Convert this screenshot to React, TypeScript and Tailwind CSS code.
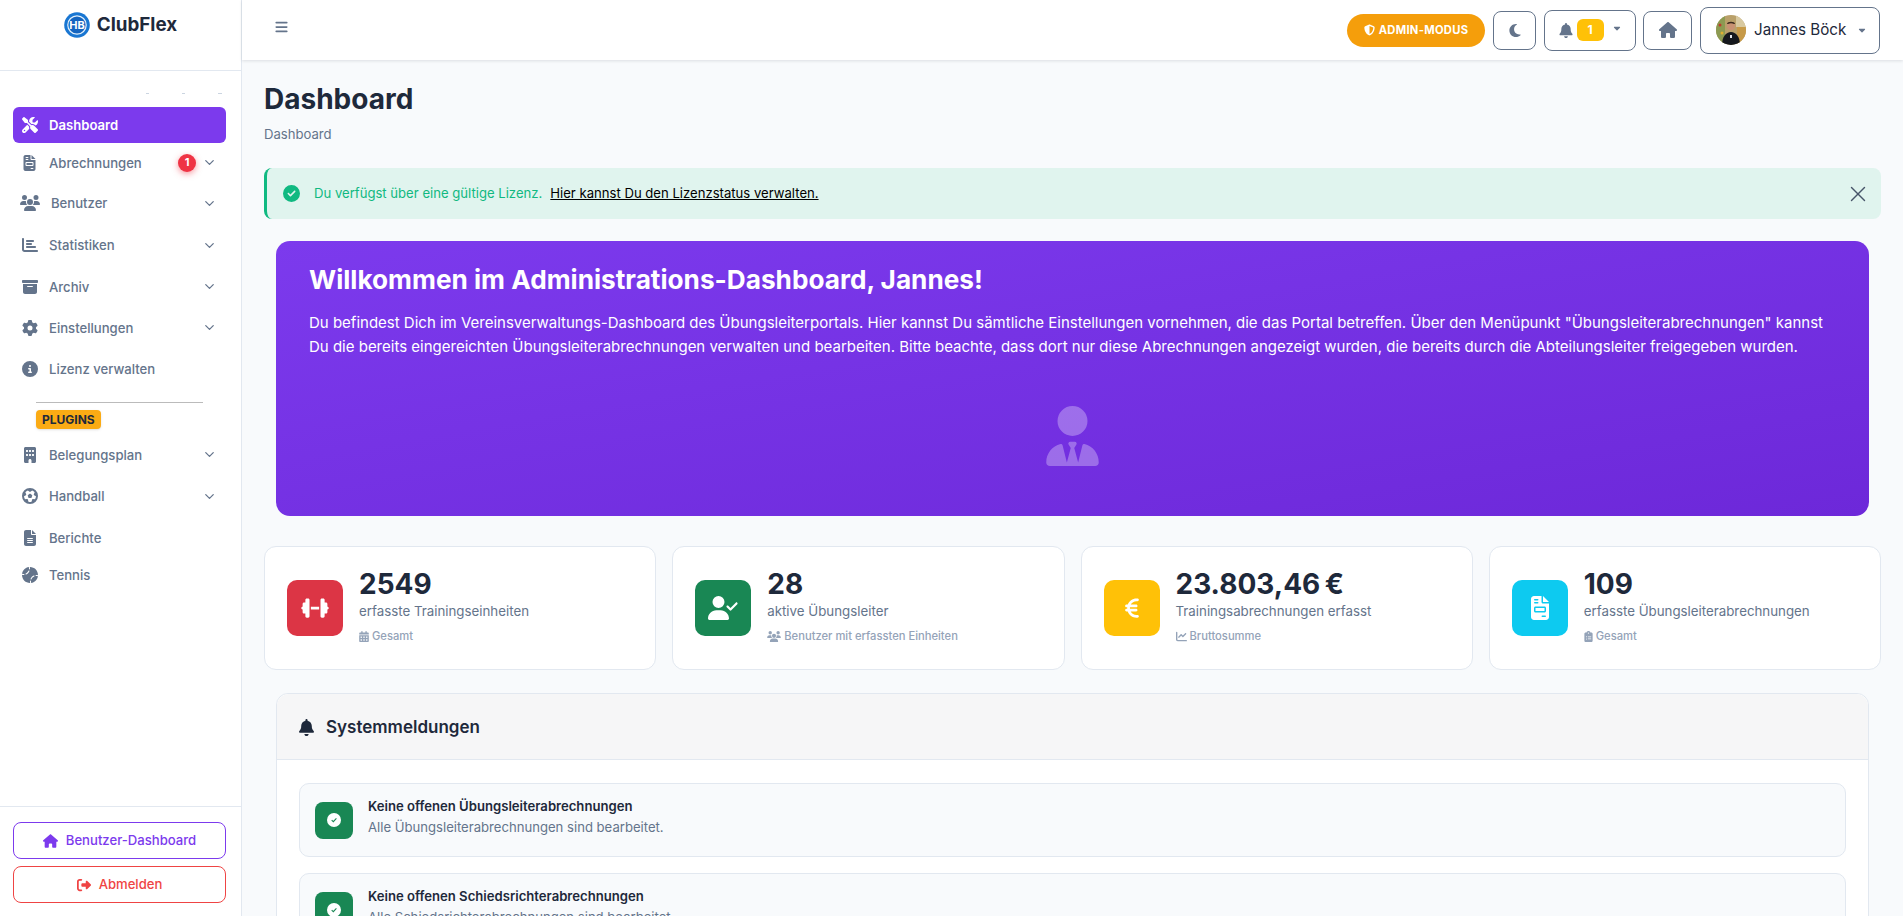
import React from "react";
import { ChevronDown, X } from "lucide-react";
import {
  FaScrewdriverWrench, FaFileInvoice, FaUsers, FaChartBar, FaBoxArchive, FaGear, FaCircleInfo, FaBuilding, FaFutbol,
  FaFileLines, FaBaseball, FaHouse, FaRightFromBracket, FaShieldHalved, FaMoon, FaBell, FaDumbbell, FaUserCheck,
  FaEuroSign, FaCalendarDays, FaChartLine, FaClipboardList, FaCircleCheck, FaUserTie, FaBars, FaCaretDown,
} from "react-icons/fa6";

function Logo() {
  return (
    <svg width="26" height="26" viewBox="0 0 26 26" className="shrink-0">
      <circle cx="13" cy="13" r="12.8" fill="#1976d2" />
      <circle cx="13" cy="13" r="9.8" fill="#e3f0fb" />
      <circle cx="13" cy="13" r="8.6" fill="#1565c0" />
      <text x="13" y="17" textAnchor="middle" fontSize="11" fontWeight="700" fill="#ffffff" fontFamily="Inter, sans-serif">HB</text>
    </svg>
  );
}

function Avatar() {
  return (
    <svg width="30" height="30" viewBox="0 0 30 30" className="shrink-0 rounded-full">
      <rect width="30" height="30" fill="#b9a06a" />
      <rect x="0" y="0" width="9" height="30" fill="#8c9a52" />
      <rect x="20" y="0" width="10" height="12" fill="#d8c9a0" />
      <rect x="21" y="12" width="9" height="18" fill="#c79a48" />
      <circle cx="4" cy="10" r="1.5" fill="#c0392b" />
      <circle cx="6" cy="18" r="1.5" fill="#e0b030" />
      <circle cx="15" cy="11" r="4.2" fill="#c99273" />
      <path d="M11 9c0-3 8-3 8 0l-1 0c-2-1-4-1-6 0z" fill="#3a2a1e" />
      <path d="M6 30c0-8 4-13 9-13s9 5 9 13z" fill="#15181d" />
      <rect x="14" y="20" width="2" height="3" fill="#e5e7eb" />
    </svg>
  );
}

type Item = { label: string; icon: React.ReactNode; h: string; chevron?: boolean; badge?: boolean; gap?: string };

const ic = "w-4 h-4";
const group1: Item[] = [
  { label: "Abrechnungen", icon: <FaFileInvoice className="w-[13px] h-[16px]" />, h: "h-[39px]", chevron: true, badge: true },
  { label: "Benutzer", icon: <FaUsers className="w-[20px] h-[16px] shrink-0" />, h: "h-[42px]", chevron: true, gap: "gap-[13px]" },
  { label: "Statistiken", icon: <FaChartBar className={ic} />, h: "h-[42px]", chevron: true },
  { label: "Archiv", icon: <FaBoxArchive className={ic} />, h: "h-[41px]", chevron: true },
  { label: "Einstellungen", icon: <FaGear className={ic} />, h: "h-[41px]", chevron: true },
  { label: "Lizenz verwalten", icon: <FaCircleInfo className={ic} />, h: "h-[41px]" },
];
const group2: Item[] = [
  { label: "Belegungsplan", icon: <FaBuilding className={ic} />, h: "h-[41px]", chevron: true },
  { label: "Handball", icon: <FaFutbol className={ic} />, h: "h-[42px]", chevron: true },
  { label: "Berichte", icon: <FaFileLines className={ic} />, h: "h-[41px]" },
  { label: "Tennis", icon: <FaBaseball className={ic} />, h: "h-[33px]" },
];

function NavRow({ item }: { item: Item }) {
  return (
    <div className={`flex items-center ${item.h} ml-[13px] w-[213px] pl-[8px] pr-[9px] text-[#64748b] text-[13.12px] font-medium ${item.gap ?? "gap-[11px]"}`}>
      <span className="w-[17px] flex justify-center shrink-0">{item.icon}</span>
      <span className="flex-1 pt-[2px]">{item.label}</span>
      {item.badge && (
        <span className="w-[18px] h-[18px] rounded-full bg-[#ef3344] text-white text-[11px] font-bold flex items-center justify-center shadow-[0_2px_6px_rgba(239,51,68,0.5)] -mr-[5px]">1</span>
      )}
      {item.chevron && <ChevronDown className="w-[15px] h-[15px] shrink-0" strokeWidth={2} />}
    </div>
  );
}

function Sidebar() {
  return (
    <aside className="w-[242px] h-full shrink-0 bg-white border-r border-[#e2e8f0] flex flex-col">
      <div className="h-[71px] shrink-0 border-b border-[#e2e8f0] flex justify-center pt-[12px]">
        <div className="flex items-center gap-[7px] h-[26px]">
          <Logo />
          <span className="text-[18.8px] font-bold text-[#1e293b]">ClubFlex</span>
        </div>
      </div>
      <nav className="flex-1 pt-[22px]">
        <div className="h-[1px] mb-[13px] flex pl-[146px] gap-[33px]">
          <span className="w-[3px] h-[1px] bg-[#cbd5e1]" />
          <span className="w-[3px] h-[1px] bg-[#cbd5e1]" />
          <span className="w-[4px] h-[1px] bg-[#cbd5e1]" />
        </div>
        <div className="flex items-center gap-[11px] h-[36px] ml-[13px] w-[213px] pl-[8px] rounded-[6px] bg-[#7c3aed] text-white text-[13.12px] font-semibold">
          <span className="w-[17px] flex justify-center"><FaScrewdriverWrench className={ic} /></span>
          <span className="pt-[2px]">Dashboard</span>
        </div>
        {group1.map((i) => <NavRow key={i.label} item={i} />)}
        <div className="ml-[36px] w-[167px] mt-[13px] border-t border-[#bbbbbb]" />
        <div className="ml-[36px] mt-[7px] w-fit h-[19px] px-[6px] flex items-center rounded-[4px] bg-[#fbab14] text-[#1e293b] text-[12px] font-bold shadow-sm">PLUGINS</div>
        <div className="h-[5px]" />
        {group2.map((i) => <NavRow key={i.label} item={i} />)}
      </nav>
      <div className="h-[110px] shrink-0 border-t border-[#e2e8f0] pt-[15px] flex flex-col gap-[7px] items-start pl-[13px]">
        <div className="w-[213px] h-[37px] rounded-[8px] border border-[#7c3aed] text-[#7c3aed] flex items-center justify-center gap-[8px] text-[13.12px] font-medium">
          <FaHouse className="w-[15px] h-[14px]" />Benutzer-Dashboard
        </div>
        <div className="w-[213px] h-[37px] rounded-[8px] border border-[#ef4444] text-[#ef4444] flex items-center justify-center gap-[8px] text-[13.12px] font-medium">
          <FaRightFromBracket className="w-[14px] h-[14px]" />Abmelden
        </div>
      </div>
    </aside>
  );
}

function Topbar() {
  const btn = "border border-[#64748b] rounded-[8px] flex items-center justify-center text-[#64748b] bg-white shrink-0";
  return (
    <header className="h-[60px] shrink-0 bg-white shadow-[0_1px_3px_rgba(15,23,42,0.12)] flex items-center pl-[33px] pr-[23px] relative">
      <FaBars className="w-[13px] h-[14px] text-[#64748b] mb-[6px]" />
      <div className="ml-auto flex items-center">
        <div className="w-[138px] h-[33px] rounded-full bg-[#f59e0b] text-white text-[11.2px] font-bold tracking-[0.3px] flex items-center justify-center gap-[4px]">
          <FaShieldHalved className="w-[11px] h-[12px]" />ADMIN-MODUS
        </div>
        <div className={`${btn} w-[43px] h-[39px] ml-[8px]`}><FaMoon className="w-[14px] h-[15px]" /></div>
        <div className={`${btn} w-[92px] h-[41px] ml-[8px] gap-[4px]`}>
          <FaBell className="w-[14px] h-[15px]" />
          <span className="w-[27px] h-[22px] rounded-[6px] bg-[#ffc107] text-white text-[12px] font-bold flex items-center justify-center">1</span>
          <FaCaretDown className="w-[10px] h-[10px] ml-[4px] -mt-[4px]" />
        </div>
        <div className={`${btn} w-[49px] h-[39px] ml-[7px]`}><FaHouse className="w-[18px] h-[16px]" /></div>
        <div className={`${btn} w-[180px] h-[47px] ml-[8px] justify-start pl-[15px] gap-[8px]`}>
          <Avatar />
          <span className="text-[15.2px] text-[#1e293b] whitespace-nowrap">Jannes Böck</span>
          <FaCaretDown className="w-[10px] h-[10px] ml-[3px]" />
        </div>
      </div>
    </header>
  );
}

function Stat({ color, icon, value, label, subIcon, sub }: { color: string; icon: React.ReactNode; value: string; label: string; subIcon: React.ReactNode; sub: string }) {
  return (
    <div className="h-[124px] bg-white border border-[#e2e8f0] rounded-[12px] flex items-center pl-[22px] gap-[16px]">
      <div className={`w-[56px] h-[56px] rounded-[10px] ${color} flex items-center justify-center text-white shrink-0`}>{icon}</div>
      <div className="flex flex-col pb-[6px]">
        <div className="text-[28px] leading-[36px] font-bold text-[#1e293b]">{value}</div>
        <div className="text-[13.3px] leading-[20px] -mt-[1px] text-[#64748b]">{label}</div>
        <div className="text-[11.2px] leading-[16px] mt-[7px] text-[#94a3b8] font-medium flex items-center gap-[3px]">{subIcon}{sub}</div>
      </div>
    </div>
  );
}

function Notice({ title, desc }: { title: string; desc: string }) {
  return (
    <div className="h-[74px] shrink-0 bg-[#f8fafc] border border-[#e2e8f0] rounded-[10px] flex items-center pl-[15px] gap-[15px]">
      <div className="w-[38px] h-[37px] rounded-[8px] bg-[#198754] flex items-center justify-center shrink-0">
        <span className="w-[14px] h-[14px] rounded-full bg-white flex items-center justify-center">
          <svg viewBox="0 0 12 12" className="w-[8px] h-[8px]"><path d="M2.5 6.2 5 8.6 9.6 3.6" fill="none" stroke="#198754" strokeWidth="1.6" /></svg>
        </span>
      </div>
      <div className="pb-[7px]">
        <div className="text-[13.12px] leading-[20px] font-semibold text-[#1e293b]">{title}</div>
        <div className="text-[13.12px] leading-[20px] mt-[1px] text-[#64748b]">{desc}</div>
      </div>
    </div>
  );
}

export default function App() {
  return (
    <div className="h-screen w-full flex overflow-hidden bg-[#f8fafc] [font-family:Inter,sans-serif]">
      <Sidebar />
      <div className="flex-1 min-w-0 flex flex-col">
        <Topbar />
        <main className="flex-1 overflow-hidden px-[22px]">
          <h1 className="mt-[21px] text-[28px] leading-[36px] font-bold text-[#1e293b]">Dashboard</h1>
          <div className="mt-[7px] text-[13.12px] leading-[20px] text-[#64748b]">Dashboard</div>
          <div className="mt-[24px] h-[51px] rounded-[8px] border-l-[3px] border-[#10b981] bg-[#e0f4ee] flex items-center pl-[16px] pr-[10px] text-[13.12px]">
            <FaCircleCheck className="w-[17px] h-[17px] text-[#10b981]" />
            <span className="ml-[14px] text-[#10b981]">Du verfügst über eine gültige Lizenz.</span>
            <span className="ml-[8px] text-black underline">Hier kannst Du den Lizenzstatus verwalten.</span>
            <X className="ml-auto w-[26px] h-[26px] text-[#475569]" strokeWidth={1.3} />
          </div>
          <section className="mt-[22px] mx-[12px] h-[275px] rounded-[14px] bg-linear-to-br from-[#7c3aed] to-[#6d28d9] pl-[33px] pr-[35px] pt-[20px] text-white flex flex-col">
            <h2 className="text-[26.2px] leading-[38px] font-bold">Willkommen im Administrations-Dashboard, Jannes!</h2>
            <p className="mt-[12px] text-[15px] leading-[24px]">
              Du befindest Dich im Vereinsverwaltungs-Dashboard des Übungsleiterportals. Hier kannst Du sämtliche Einstellungen vornehmen, die das Portal betreffen. Über den Menüpunkt "Übungsleiterabrechnungen" kannst Du die bereits eingereichten Übungsleiterabrechnungen verwalten und bearbeiten. Bitte beachte, dass dort nur diese Abrechnungen angezeigt wurden, die bereits durch die Abteilungsleiter freigegeben wurden.
            </p>
            <div className="mt-[47px] flex justify-center pl-[2px]">
              <FaUserTie className="w-[53px] h-[60px] text-white/30" />
            </div>
          </section>
          <div className="mt-[30px] grid grid-cols-4 gap-[16px]">
            <Stat color="bg-[#dc3545]" icon={<FaDumbbell className="w-[28px] h-[22px]" />} value="2549" label="erfasste Trainingseinheiten" subIcon={<FaCalendarDays className="w-[10px] h-[11px]" />} sub="Gesamt" />
            <Stat color="bg-[#198754]" icon={<FaUserCheck className="w-[30px] h-[24px]" />} value="28" label="aktive Übungsleiter" subIcon={<FaUsers className="w-[14px] h-[11px]" />} sub="Benutzer mit erfassten Einheiten" />
            <Stat color="bg-[#ffc107]" icon={<FaEuroSign className="w-[16px] h-[22px]" />} value={"23.803,46\u202f€"} label="Trainingsabrechnungen erfasst" subIcon={<FaChartLine className="w-[11px] h-[11px]" />} sub="Bruttosumme" />
            <Stat color="bg-[#0dcaf0]" icon={<FaFileInvoice className="w-[18px] h-[24px]" />} value="109" label="erfasste Übungsleiterabrechnungen" subIcon={<FaClipboardList className="w-[9px] h-[11px]" />} sub="Gesamt" />
          </div>
          <section className="mt-[23px] mx-[12px] bg-white border border-[#e2e8f0] rounded-[12px]">
            <div className="h-[66px] bg-[#f6f6f7] border-b border-[#e2e8f0] rounded-t-[12px] flex items-center pl-[22px] gap-[12px] pt-[2px]">
              <FaBell className="w-[15px] h-[17px] text-[#1e293b]" />
              <span className="text-[17px] font-semibold text-[#1e293b]">Systemmeldungen</span>
            </div>
            <div className="px-[22px] pt-[23px] flex flex-col gap-[16px]">
              <Notice title="Keine offenen Übungsleiterabrechnungen" desc="Alle Übungsleiterabrechnungen sind bearbeitet." />
              <Notice title="Keine offenen Schiedsrichterabrechnungen" desc="Alle Schiedsrichterabrechnungen sind bearbeitet." />
            </div>
          </section>
        </main>
      </div>
    </div>
  );
}
